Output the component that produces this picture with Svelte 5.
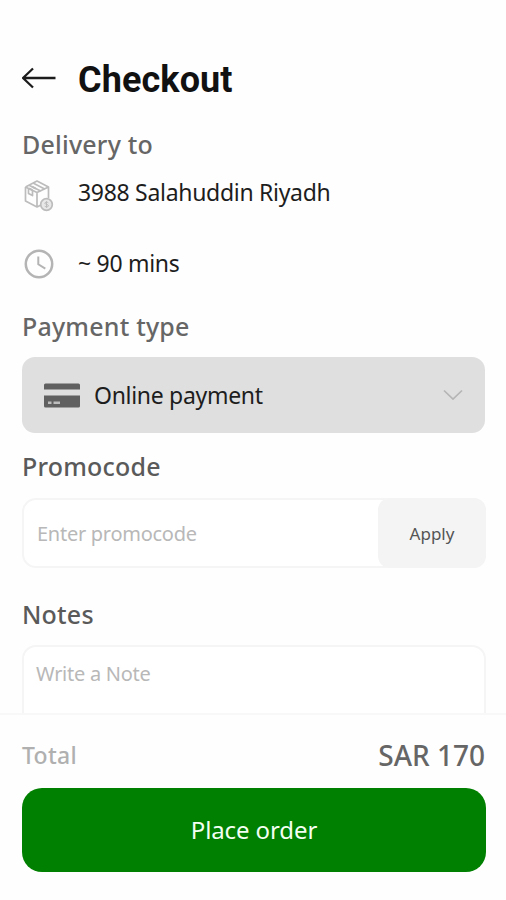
<script lang="ts">
	let address = $state('3988 Salahuddin Riyadh');
	let eta = $state(90);
	let promocode = $state('');
	let note = $state('');
	let total = $state(170);
</script>

<div class="page">
	<main class="content">
		<header class="header">
			<button class="back" aria-label="Back">
				<svg width="34" height="22" viewBox="0 0 34 22" fill="none">
					<path d="M33.500 11H1.500M11 1.500L1 11l10 9.500" stroke="#1c1c1c" stroke-width="2.300" stroke-linejoin="round" />
				</svg>
			</button>
			<h1>Checkout</h1>
		</header>

		<h2 class="delivery-title">Delivery to</h2>
		<div class="info">
			<svg class="box-icon" width="30" height="32" viewBox="0 0 30 32" fill="none" stroke="#bcbcbc" stroke-width="1.700" stroke-linejoin="round">
				<path d="M1.500 7L13 1l11.500 6v11M1.500 7v14L13 27l4-2M1.500 7L13 12.500 24.500 7M13 12.500V27" />
				<path d="M5 5.200L16.700 11M9 3.100L20.700 8.900M4.500 8.500v5l4 2v-5" />
				<path d="M5 8.400l3.500 1.800M8 6.700l3.800 1.900" stroke-width="2" />
				<circle cx="22.500" cy="24.500" r="5.800" fill="#e8e8e8" />
				<path d="M24.300 22.800c-1-1-3.500-.7-3.500.5 0 1.400 3.700.8 3.700 2.500 0 1.200-2.500 1.500-3.800.3M22.500 21.200v6.600" stroke-width="1" />
			</svg>
			<span>{address}</span>
		</div>
		<div class="info time">
			<svg class="clock-icon" width="30" height="30" viewBox="0 0 30 30" fill="none" stroke="#b4b4b4">
				<circle cx="15" cy="15" r="13.200" stroke-width="2.500" />
				<path d="M14.300 7.500v7.800l7 4.400" stroke-width="2" />
			</svg>
			<span>~ {eta} mins</span>
		</div>

		<h2 class="payment-title">Payment type</h2>
		<button class="select">
			<svg width="36" height="25" viewBox="0 0 36 25">
				<path d="M0 6.500V2Q0 .5 1.500.5h33Q36 .5 36 2v4.500zM0 12.500h36V23q0 1.500-1.500 1.500h-33Q0 24.500 0 23z" fill="#606060" />
				<path d="M4 18.500h3.500V21H4zM9.500 18.500H16V21H9.500z" fill="#bdbdbd" />
			</svg>
			<span class="method">Online payment</span>
			<svg class="chevron" width="20" height="12" viewBox="0 0 20 12" fill="none">
				<path d="M1 1.500l9 8.500 9-8.500" stroke="#b5b5b5" stroke-width="1.700" />
			</svg>
		</button>

		<h2 class="promo-title">Promocode</h2>
		<div class="promo">
			<input bind:value={promocode} placeholder="Enter promocode" />
			<button class="apply">Apply</button>
		</div>

		<h2 class="notes-title">Notes</h2>
		<textarea bind:value={note} placeholder="Write a Note"></textarea>
	</main>

	<footer class="footer">
		<div class="summary">
			<span class="total">Total</span>
			<span class="amount">SAR {total}</span>
		</div>
		<button class="order">Place order</button>
	</footer>
</div>

<style>
	:global(body) {
		background: #fff;
	}

	.page {
		display: flex;
		flex-direction: column;
		width: 506px;
		height: 900px;
		overflow: hidden;
		background: #fefefe;
		font-family: 'Noto Sans', sans-serif;
		color: #1d1d1d;
	}

	.page * {
		box-sizing: border-box;
	}

	button,
	input,
	textarea {
		font-family: inherit;
		border: 0;
		margin: 0;
		padding: 0;
		background: none;
		outline: none;
	}

	.content {
		height: 713px;
		overflow: hidden;
		padding: 54px 21px 0 22px;
	}

	.header {
		display: flex;
		align-items: center;
		height: 50px;
	}

	.back {
		display: flex;
		width: 56px;
		padding-bottom: 2px;
	}

	h1 {
		margin: 0;
		padding-top: 1px;
		font-family: Roboto, sans-serif;
		font-size: 36px;
		font-weight: 700;
		letter-spacing: 0.1px;
		color: #111;
	}

	h2 {
		margin: 0;
		height: 34px;
		line-height: 34px;
		font-size: 25px;
		font-weight: 500;
		letter-spacing: 0.2px;
		color: #666;
	}

	.delivery-title { margin-top: 23px; }
	.payment-title  { margin-top: 17px; }
	.promo-title    { margin-top: 16px; color: #5a5a5a; }
	.notes-title    { margin-top: 29px; color: #5a5a5a; }

	.info {
		display: flex;
		align-items: center;
		gap: 24px;
		height: 62px;
		padding-left: 2px;
		font-size: 23px;
		letter-spacing: -0.3px;
	}

	.box-icon {
		margin-top: 8px;
	}

	.time {
		height: 59px;
		margin-top: 10px;
	}

	.clock-icon {
		margin-top: 3px;
	}

	.select {
		display: flex;
		align-items: center;
		width: 463px;
		height: 76px;
		margin-top: 14px;
		padding: 0 22px;
		border-radius: 13px;
		background: #dfdfdf;
		font-size: 23px;
		letter-spacing: -0.3px;
		color: #1d1d1d;
	}

	.method {
		margin-left: 14px;
	}

	.chevron {
		margin-left: auto;
	}

	.promo {
		display: flex;
		width: 464px;
		height: 70px;
		margin-top: 15px;
		border: 2px solid #f5f5f5;
		border-radius: 14px;
		background: #fff;
	}

	.promo input {
		flex: 1;
		min-width: 0;
		padding-left: 13px;
		font-size: 20px;
		letter-spacing: -0.27px;
	}

	input::placeholder,
	textarea::placeholder {
		color: #b8b8b8;
		opacity: 1;
	}

	.apply {
		width: 108px;
		margin: -2px -2px -2px 0;
		border-radius: 12px;
		background: #f4f4f4;
		font-size: 17px;
		color: #555;
	}

	textarea {
		display: block;
		width: 464px;
		height: 140px;
		margin-top: 14px;
		padding: 13px 12px;
		border: 2px solid #f5f5f5;
		border-radius: 14px;
		background: #fff;
		font-size: 20px;
		line-height: 28px;
		letter-spacing: -0.27px;
		resize: none;
	}

	.footer {
		flex: 1;
		padding: 16px 20px 0 22px;
		border-top: 2px solid #f8f8f8;
	}

	.summary {
		display: flex;
		align-items: center;
		justify-content: space-between;
		height: 48px;
		padding-right: 1px;
	}

	.total {
		font-size: 23px;
		font-weight: 500;
		letter-spacing: 0.3px;
		color: #b0b0b0;
	}

	.amount {
		font-size: 28px;
		font-weight: 500;
		color: #666;
	}

	.order {
		display: block;
		width: 464px;
		height: 84px;
		margin-top: 9px;
		padding-bottom: 2px;
		border-radius: 20px;
		background: #008000;
		font-size: 24px;
		letter-spacing: -0.1px;
		color: #f2fff2;
	}
</style>
